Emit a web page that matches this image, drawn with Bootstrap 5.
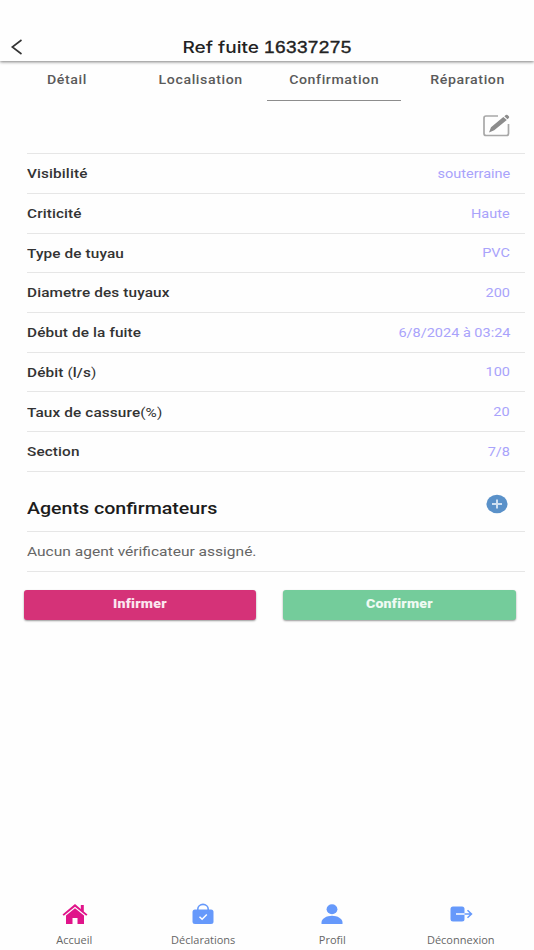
<!DOCTYPE html>
<html lang="fr">
<head>
<meta charset="utf-8">
<meta name="viewport" content="width=device-width, initial-scale=1">
<title>Ref fuite 16337275</title>
<link href="https://cdn.jsdelivr.net/npm/bootstrap@5.3.0/dist/css/bootstrap.min.css" rel="stylesheet">
<style>
body{font-family:Roboto,"Liberation Sans",sans-serif;background:#fefefe;height:950px;overflow:hidden;color:#333}
.wide{display:inline-block;transform:scaleX(1.18);white-space:nowrap}
.from-start{transform-origin:0 50%}
.from-end{transform-origin:100% 50%}
.topbar{height:61px;padding-top:33px;box-shadow:0 1px 3px rgba(0,0,0,.5);background:#fefefe}
.topbar h1{font:500 16px/28px Inter,"Liberation Sans",sans-serif;color:#222}
.topbar .wide{transform:scaleX(1.19)}
.ref-no{font-family:"Liberation Sans",sans-serif;font-weight:400;-webkit-text-stroke:.35px #222;letter-spacing:.3px}
.back{left:10px;top:38px}
.tabs a{height:40px;line-height:38px;font-size:12px;font-weight:500;color:#5a5a5a;letter-spacing:.5px;border-bottom:1.5px solid transparent}
.tabs a.current{border-color:#8d8d8d}
.details{padding-left:26.5px;padding-right:9px}
.edit-row{height:52.3px;padding:11px 14px 0 0}
.line{border-top:1.5px solid #e6e6e6;height:39.7px;padding-right:15px;font-size:13px}
.line dt{font-weight:500;color:#333;letter-spacing:.1px;padding-top:1px}
.line dd{color:#a9a3fb}
.line dd.wide{transform:scaleX(1.115)}
.line.agents{height:60.3px;padding:14px 17px 0 0}
.agents h2{font-size:17px;font-weight:500;color:#1c1c1c}
.agents h2.wide{transform:scaleX(1.153)}
.none{color:#666}
.none .wide{transform:scaleX(1.195)}
.last{border-top:1px solid #e6e6e6}
.actions{padding:18px 18.5px 0 24px;gap:27px}
.actions .btn{height:30px;border:0;border-radius:3px;padding:0;line-height:27px;font-size:12px;font-weight:900;letter-spacing:.2px;box-shadow:0 1px 2px rgba(0,0,0,.4)}
.btn-deny,.btn-deny:hover{background:#d53278;color:#fbe6ef}
.btn-ok,.btn-ok:hover{background:#74cc9b;color:#effaf3}
.bottom{padding:0 9px 0 10.5px;height:51px}
.bottom a{font:10px/14px "Open Sans",sans-serif;color:#666}
.bottom svg{height:24px;margin-top:3px;margin-bottom:7px}
.bottom .wide{transform:scaleX(1.1)}
</style>
<script src="https://cdn.jsdelivr.net/npm/bootstrap@5.3.0/dist/js/bootstrap.bundle.min.js"></script>
</head>
<body class="d-flex flex-column">
<header class="topbar position-relative text-center flex-shrink-0">
  <a href="#" class="back position-absolute d-flex" aria-label="Retour"><svg width="14" height="18" viewBox="0 0 14 18" fill="none" stroke="#333" stroke-width="1.6"><path d="M11.500 2 2.300 9l9.200 7"/></svg></a>
  <h1 class="m-0"><span class="wide">Ref fuite <span class="ref-no">16337275</span></span></h1>
</header>
<nav class="tabs row g-0 text-center flex-shrink-0">
  <a href="#" class="col text-decoration-none"><span class="wide">Détail</span></a>
  <a href="#" class="col text-decoration-none"><span class="wide">Localisation</span></a>
  <a href="#" class="col text-decoration-none current"><span class="wide">Confirmation</span></a>
  <a href="#" class="col text-decoration-none"><span class="wide">Réparation</span></a>
</nav>
<main class="flex-grow-1">
  <div class="details">
    <div class="edit-row d-flex justify-content-end"><svg width="30" height="28" viewBox="0 0 30 28" fill="none"><path d="M17 4H5Q3 4 3 6V21.500Q3 23.500 5 23.500H25.500Q27.500 23.500 27.500 21.500V12" stroke="#a8a8a8" stroke-width="1.700"/><path d="m8 20.500 2-5.200L22.300 5l3.500 3.100L13.200 18.200zM23.300 4.200l1.500-1.200q.9-.6 1.700.1l1.300 1.200q.8.800 0 1.600L26.500 7.200z" fill="#8c8c8c"/></svg></div>
    <dl class="m-0">
      <div class="line d-flex justify-content-between align-items-center"><dt class="wide from-start">Visibilité</dt><dd class="wide from-end m-0">souterraine</dd></div>
      <div class="line d-flex justify-content-between align-items-center"><dt class="wide from-start">Criticité</dt><dd class="wide from-end m-0">Haute</dd></div>
      <div class="line d-flex justify-content-between align-items-center"><dt class="wide from-start">Type de tuyau</dt><dd class="wide from-end m-0">PVC</dd></div>
      <div class="line d-flex justify-content-between align-items-center"><dt class="wide from-start">Diametre des tuyaux</dt><dd class="wide from-end m-0">200</dd></div>
      <div class="line d-flex justify-content-between align-items-center"><dt class="wide from-start">Début de la fuite</dt><dd class="wide from-end m-0">6/8/2024 à 03:24</dd></div>
      <div class="line d-flex justify-content-between align-items-center"><dt class="wide from-start">Débit <span class="fw-normal">(</span>l/s<span class="fw-normal">)</span></dt><dd class="wide from-end m-0">100</dd></div>
      <div class="line d-flex justify-content-between align-items-center"><dt class="wide from-start">Taux de cassure<span class="fw-normal">(%)</span></dt><dd class="wide from-end m-0">20</dd></div>
      <div class="line d-flex justify-content-between align-items-center"><dt class="wide from-start">Section</dt><dd class="wide from-end m-0">7/8</dd></div>
    </dl>
    <div class="line agents d-flex justify-content-between align-items-center">
      <h2 class="wide from-start m-0">Agents confirmateurs</h2>
      <svg class="mb-2" width="22" height="20" viewBox="0 0 22 20"><ellipse cx="11" cy="10" rx="10.600" ry="9.200" fill="#5a91c9"/><path d="M6 10h10M11 5.500v9" stroke="#cfe0f2" stroke-width="2"/></svg>
    </div>
    <div class="line d-flex align-items-center none"><span class="wide from-start">Aucun agent vérificateur assigné.</span></div>
    <div class="last"></div>
  </div>
  <div class="actions d-flex">
    <button class="btn btn-deny flex-fill w-50"><span class="wide">Infirmer</span></button>
    <button class="btn btn-ok flex-fill w-50"><span class="wide">Confirmer</span></button>
  </div>
</main>
<footer class="bottom row g-0 text-center flex-shrink-0">
  <a href="#" class="col text-decoration-none d-flex flex-column align-items-center"><svg width="28" viewBox="0 0 28 24"><path d="M14 2 1.500 12.500l1.300 1.300L14 4.700l11.200 9.100 1.300-1.300-3.700-3.100V3h-3v3.900z" fill="#e0148a"/><path d="M14 6.200 5 13.500V22h6.500v-6h5v6H23v-8.500z" fill="#e0148a"/></svg><span class="wide">Accueil</span></a>
  <a href="#" class="col text-decoration-none d-flex flex-column align-items-center"><svg width="24" viewBox="0 0 24 24" fill="none"><rect x="1.500" y="7.500" width="21" height="14.500" rx="2.500" fill="#6699fb"/><path d="M6.800 9V7a5.200 4.600 0 0 1 10.400 0v2" stroke="#6699fb" stroke-width="1.600"/><path d="m8.500 14.800 2.600 2.400 4.700-4.700" stroke="#fff" stroke-width="1.500"/></svg><span class="wide">Déclarations</span></a>
  <a href="#" class="col text-decoration-none d-flex flex-column align-items-center"><svg width="24" viewBox="0 0 24 24" fill="#6699fb"><ellipse cx="12" cy="7.200" rx="5.400" ry="5"/><path d="M1.500 22v-1.500c0-4 5-6.800 10.500-6.800s10.500 2.800 10.500 6.800V22z"/></svg><span class="wide">Profil</span></a>
  <a href="#" class="col text-decoration-none d-flex flex-column align-items-center"><svg width="24" viewBox="0 0 24 24" fill="none"><rect x="1.500" y="4.500" width="14" height="15" rx="2.500" fill="#6699fb"/><path d="M7 12h9" stroke="#fff" stroke-width="1.500"/><path d="M15.500 12H22M18.500 8.200l4 3.800-4 3.800" stroke="#6699fb" stroke-width="1.500"/></svg><span class="wide">Déconnexion</span></a>
</footer>
</body>
</html>
